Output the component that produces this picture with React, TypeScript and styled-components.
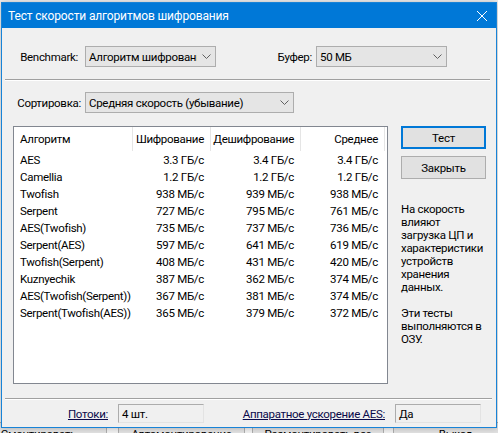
import React from 'react';
import styled, { createGlobalStyle } from 'styled-components';

const GlobalStyle = createGlobalStyle`
  html, body {
    margin: 0;
    padding: 0;
  }
  body {
    background: #f0f0f0;
    font-family: Roboto, "Noto Sans", sans-serif;
    font-size: 11.5px;
    letter-spacing: -0.3px;
    color: #000;
  }
  * { box-sizing: border-box; }
`;

const Desktop = styled.div`
  position: relative;
  width: 498px;
  height: 433px;
  overflow: hidden;
  background: #f0f0f0;
  display: flex;
  flex-direction: column;
`;

const BackContent = styled.div`
  flex: 0 0 422px;
`;

const BackFooter = styled.div`
  display: flex;
  margin-left: -30px;
`;

const BackButton = styled.div<{ $w: number; $gap: number }>`
  flex: 0 0 ${p => p.$w}px;
  margin-right: ${p => p.$gap}px;
  height: 24px;
  background: #e1e1e1;
  border: 1px solid #adadad;
  display: flex;
  align-items: center;
  justify-content: center;
  white-space: nowrap;
  overflow: hidden;
`;

const Dialog = styled.div`
  position: absolute;
  left: 1px;
  top: 2px;
  width: 496px;
  height: 426px;
  border: 1px solid #1883d7;
  background: #f0f0f0;
  display: flex;
  flex-direction: column;
  box-shadow: 0 0 6px rgba(0, 0, 0, 0.25);
`;

const TitleBar = styled.div`
  flex: 0 0 25px;
  background: #0078d7;
  color: #fff;
  display: flex;
  align-items: center;
  justify-content: space-between;
  padding: 0 9px 0 6px;
  font-size: 12px;
  letter-spacing: -0.15px;
`;

const Body = styled.div`
  flex: 1;
  display: flex;
  flex-direction: column;
`;

const Row = styled.div<{ $top: number }>`
  display: flex;
  align-items: center;
  height: 21px;
  margin-top: ${p => p.$top}px;
  padding-left: 12px;
`;

const FieldLabel = styled.div<{ $w: number; $pr: number }>`
  flex: 0 0 ${p => p.$w}px;
  min-width: 0;
  text-align: right;
  padding-right: ${p => p.$pr}px;
  white-space: nowrap;
`;

const Combo = styled.div<{ $w: number }>`
  flex: 0 0 ${p => p.$w}px;
  width: ${p => p.$w}px;
  min-width: 0;
  overflow: hidden;
  height: 21px;
  background: #e5e5e5;
  border: 1px solid #adadad;
  display: flex;
  align-items: center;
  padding: 0 4px 0 3px;
  gap: 5px;
`;

const ComboText = styled.span`
  flex: 1;
  min-width: 0;
  overflow: hidden;
  white-space: nowrap;
`;

const Separator = styled.div<{ $top: number; $right: number }>`
  margin: ${p => p.$top}px ${p => p.$right}px 0 3px;
  border-top: 1px solid #a0a0a0;
  border-bottom: 1px solid #fff;
`;

const Main = styled.div`
  display: flex;
  margin-top: 13px;
  padding-left: 11px;
  gap: 13px;
`;

const ListBox = styled.div`
  flex: 0 0 375px;
  height: 258px;
  background: #fff;
  border: 1px solid #828790;
`;

const Grid = styled.div`
  display: grid;
  grid-template-columns: 119px 78px 90px 84px;
`;

const HeadCell = styled.div<{ $first: boolean }>`
  height: 24px;
  display: flex;
  align-items: center;
  justify-content: ${p => (p.$first ? 'flex-start' : 'flex-end')};
  padding: ${p => (p.$first ? '0 0 0 6px' : '0 6px 0 0')};
  border-right: 1px solid #e5e5e5;
  white-space: nowrap;
`;

const Cell = styled.div<{ $first: boolean }>`
  height: 17px;
  display: flex;
  align-items: center;
  justify-content: ${p => (p.$first ? 'flex-start' : 'flex-end')};
  padding: ${p => (p.$first ? '0 0 0 6px' : '0 7px 0 0')};
  white-space: nowrap;
`;

const Side = styled.div`
  flex: 0 0 85px;
  display: flex;
  flex-direction: column;
  gap: 7px;
`;

const Button = styled.div<{ $default?: boolean }>`
  height: 23px;
  background: #e1e1e1;
  border: ${p => (p.$default ? '2px solid #0078d7' : '1px solid #adadad')};
  display: flex;
  align-items: center;
  justify-content: center;
`;

const Note = styled.div`
  margin-top: 17px;
  line-height: 13px;
  white-space: nowrap;

  p {
    margin: 0 0 13px 0;
  }
`;

const BottomRow = styled.div`
  display: flex;
  align-items: center;
  margin-top: 4px;
  padding-left: 12px;
  height: 19px;
`;

const LinkLabel = styled.div<{ $w: number }>`
  flex: 0 0 ${p => p.$w}px;
  text-align: right;
  padding-right: 10px;
  white-space: nowrap;

  span {
    color: #0a0a4a;
    text-decoration: underline;
  }
`;

const ReadOnly = styled.div`
  flex: 0 0 86px;
  height: 19px;
  background: #f0f0f0;
  border: 1px solid;
  border-color: #acacac #e3e3e3 #e3e3e3 #acacac;
  display: flex;
  align-items: center;
  padding-left: 3px;
`;

const Chevron = () => (
  <svg width="9" height="5" viewBox="0 0 9 5" style={{ flex: '0 0 9px' }}>
    <path d="M0.5 0.5 L4.5 4.5 L8.5 0.5" fill="none" stroke="#606060" strokeWidth="1" />
  </svg>
);

const CloseIcon = () => (
  <svg width="10" height="10" viewBox="0 0 10 10">
    <path d="M0 0 L10 10 M10 0 L0 10" stroke="#fff" strokeWidth="1" />
  </svg>
);

const results = [
  ['AES', '3.3 ГБ/с', '3.4 ГБ/с', '3.4 ГБ/с'],
  ['Camellia', '1.2 ГБ/с', '1.2 ГБ/с', '1.2 ГБ/с'],
  ['Twofish', '938 МБ/с', '939 МБ/с', '938 МБ/с'],
  ['Serpent', '727 МБ/с', '795 МБ/с', '761 МБ/с'],
  ['AES(Twofish)', '735 МБ/с', '737 МБ/с', '736 МБ/с'],
  ['Serpent(AES)', '597 МБ/с', '641 МБ/с', '619 МБ/с'],
  ['Twofish(Serpent)', '408 МБ/с', '431 МБ/с', '420 МБ/с'],
  ['Kuznyechik', '387 МБ/с', '362 МБ/с', '374 МБ/с'],
  ['AES(Twofish(Serpent))', '367 МБ/с', '381 МБ/с', '374 МБ/с'],
  ['Serpent(Twofish(AES))', '365 МБ/с', '379 МБ/с', '372 МБ/с']
];

const headers = ['Алгоритм', 'Шифрование', 'Дешифрование', 'Среднее'];

const App: React.FC = () => {
  return (
    <>
      <GlobalStyle />
      <Desktop>
        <BackContent />
        <BackFooter>
          <BackButton $w={137} $gap={11}>Смонтировать</BackButton>
          <BackButton $w={127} $gap={7}>Автомонтирование</BackButton>
          <BackButton $w={132} $gap={9}>Размонтировать все</BackButton>
          <BackButton $w={125} $gap={0}>Выход</BackButton>
        </BackFooter>

        <Dialog>
          <TitleBar>
            <span>Тест скорости алгоритмов шифрования</span>
            <CloseIcon />
          </TitleBar>
          <Body>
            <Row $top={18}>
              <FieldLabel $w={71} $pr={7}>Benchmark:</FieldLabel>
              <Combo $w={131}>
                <ComboText>Алгоритм шифрования</ComboText>
                <Chevron />
              </Combo>
              <FieldLabel $w={100} $pr={4}>Буфер:</FieldLabel>
              <Combo $w={131}>
                <ComboText>50 МБ</ComboText>
                <Chevron />
              </Combo>
            </Row>

            <Separator $top={12} $right={6} />

            <Row $top={11}>
              <FieldLabel $w={71} $pr={4}>Сортировка:</FieldLabel>
              <Combo $w={209}>
                <ComboText>Средняя скорость (убывание)</ComboText>
                <Chevron />
              </Combo>
            </Row>

            <Main>
              <ListBox>
                <Grid>
                  {headers.map((h, i) => (
                    <HeadCell key={h} $first={i === 0}>{h}</HeadCell>
                  ))}
                  {results.map(row =>
                    row.map((v, i) => (
                      <Cell key={row[0] + i} $first={i === 0}>{v}</Cell>
                    ))
                  )}
                </Grid>
              </ListBox>
              <Side>
                <Button $default>Тест</Button>
                <Button>Закрыть</Button>
                <Note>
                  <p>
                    На скорость<br />
                    влияют<br />
                    загрузка ЦП и<br />
                    характеристики<br />
                    устройств<br />
                    хранения<br />
                    данных.
                  </p>
                  <p>
                    Эти тесты<br />
                    выполняются в<br />
                    ОЗУ.
                  </p>
                </Note>
              </Side>
            </Main>

            <Separator $top={14} $right={4} />

            <BottomRow>
              <LinkLabel $w={104}><span>Потоки:</span></LinkLabel>
              <ReadOnly>4 шт.</ReadOnly>
              <LinkLabel $w={191}><span>Аппаратное ускорение AES:</span></LinkLabel>
              <ReadOnly>Да</ReadOnly>
            </BottomRow>
          </Body>
        </Dialog>
      </Desktop>
    </>
  );
};

export default App;
